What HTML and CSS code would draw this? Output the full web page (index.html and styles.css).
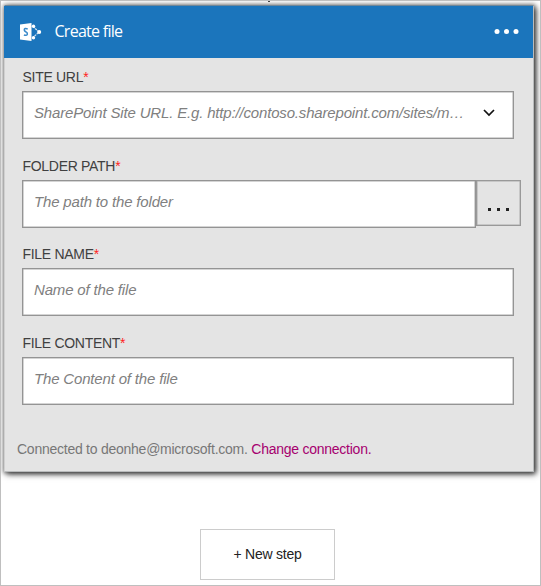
FILE: index.html
```html
<!DOCTYPE html>
<html lang="en">
<head>
<meta charset="utf-8">
<title>Create file</title>
<link rel="stylesheet" href="styles.css">
</head>
<body>
<main class="canvas">
  <span class="connector"></span>
  <section class="card">
    <header class="card-header">
      <svg class="logo" width="22" height="20" viewBox="0 0 22 20">
        <path d="M13 4.500L19 10L13 15.500" fill="none" stroke="#d5e6f4" stroke-width="1.200" stroke-dasharray="2.200 .8"/>
        <circle cx="13.500" cy="4.300" r="1.700" fill="#fff"/>
        <circle cx="19.200" cy="10" r="2" fill="#fff"/>
        <circle cx="13.500" cy="15.700" r="1.700" fill="#fff"/>
        <path d="M0 2.500L11.500 1V19L0 17.500Z" fill="#fff"/>
        <path d="M7.700 6.900Q4.300 5.700 4.300 8Q4.300 9.200 6 9.900Q7.600 10.700 7.300 12.200Q6.700 13.800 3.900 12.900" fill="none" stroke="#3b8aca" stroke-width="1.600"/>
      </svg>
      <h1 class="title">Create file</h1>
      <svg class="more" width="26" height="6" viewBox="0 0 26 6" fill="#fff">
        <circle cx="3" cy="2.500" r="2.500"/><circle cx="12.500" cy="2.500" r="2.500"/><circle cx="22" cy="2.500" r="2.500"/>
      </svg>
    </header>
    <div class="fields">
      <div class="field">
        <div class="label">SITE URL<span class="star">*</span></div>
        <div class="input"><span class="hint">SharePoint Site URL. E.g. http://contoso.sharepoint.com/sites/m…</span>
          <svg class="chevron" width="12" height="8" viewBox="0 0 12 8"><path d="M1 1L6 6L11 1" fill="none" stroke="#111" stroke-width="1.700"/></svg>
        </div>
      </div>
      <div class="field">
        <div class="label">FOLDER PATH<span class="star">*</span></div>
        <div class="row">
          <div class="input short"><span class="hint">The path to the folder</span></div>
          <div class="browse"><i></i><i></i><i></i></div>
        </div>
      </div>
      <div class="field">
        <div class="label">FILE NAME<span class="star">*</span></div>
        <div class="input"><span class="hint">Name of the file</span></div>
      </div>
      <div class="field">
        <div class="label">FILE CONTENT<span class="star">*</span></div>
        <div class="input"><span class="hint">The Content of the file</span></div>
      </div>
    </div>
    <footer class="connection">Connected to deonhe@microsoft.com. <a class="change">Change connection.</a></footer>
  </section>
  <div class="new-step">+ New step</div>
</main>
</body>
</html>
```
FILE: styles.css
```css
* { box-sizing: border-box; }
body { margin: 0; background: #fff; font-family: "Liberation Sans", Arial, sans-serif; }
.canvas {
  position: relative;
  width: 541px;
  height: 586px;
  border: 1px solid #bfbfbf;
  padding: 4px 0 0 3px;
  overflow: hidden;
}
.connector { position: absolute; left: 267px; top: 0; width: 2px; height: 1px; background: #444; }
.card {
  width: 530px;
  height: 467px;
  background: #e4e4e4;
  border: 1px solid #b9bbbc;
  border-top-color: #6f8799;
  border-left-color: #d0d0d0;
  box-shadow: 2px 2px 6px rgba(0, 0, 0, .8), 0 0 4px 1px rgba(0, 0, 0, .3);
  display: flex;
  flex-direction: column;
}
.card-header {
  height: 52px;
  flex: none;
  display: flex;
  align-items: center;
  padding: 0 13px 0 14px;
  margin-left: -1px;
  background: #1b75bc;
}
.logo { margin-left: 2px; }
.title {
  margin: -2px auto 0 12.500px;
  font: 400 16px/20px "Open Sans", sans-serif;
  letter-spacing: -.72px;
  color: #fff;
}
.fields { padding: 11px 0 0 17px; }
.field { height: 88.600px; }
.label {
  height: 22px;
  padding-left: .5px;
  font-size: 14px;
  line-height: 16px;
  letter-spacing: -.3px;
  color: #404040;
  white-space: nowrap;
}
.star { color: #f22; }
.input {
  width: 492px;
  height: 48px;
  display: flex;
  align-items: center;
  justify-content: space-between;
  padding: 0 18px 4px 11px;
  border: 1px solid #949494;
  box-shadow: inset 0 0 0 .5px #aaa;
  background: #fff;
}
.hint {
  font-size: 15px;
  line-height: 18px;
  letter-spacing: -.17px;
  font-style: italic;
  color: #808080;
  white-space: nowrap;
}
.row { display: flex; }
.short { width: 454px; }
.browse {
  width: 45px;
  height: 46px;
  display: flex;
  justify-content: center;
  gap: 6px;
  padding-top: 27px;
  border: 1px solid #999;
  box-shadow: inset 0 0 0 .5px #aaa;
}
.browse i { width: 3px; height: 3px; background: #222; }
.connection {
  margin: 18px 0 0 12px;
  font-size: 14px;
  line-height: 16px;
  letter-spacing: -.25px;
  color: #777;
  white-space: nowrap;
}
.change { color: #a6006f; }
.new-step {
  width: 135px;
  height: 51px;
  margin: 57px 0 0 196px;
  border: 1px solid #ccc;
  font-size: 14px;
  line-height: 49px;
  letter-spacing: -.25px;
  text-align: center;
  color: #222;
}
```
